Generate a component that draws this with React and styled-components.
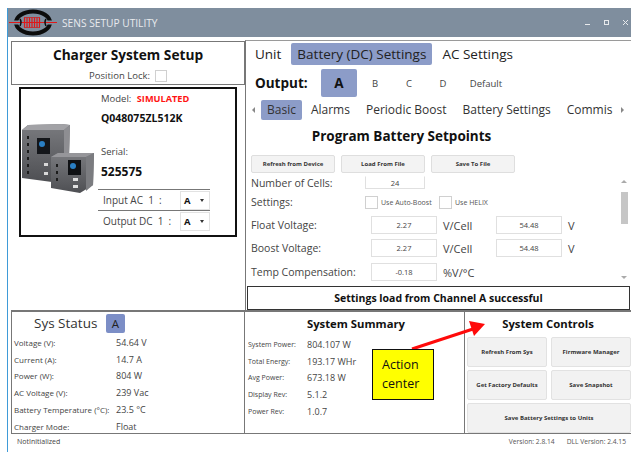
import React from "react";
import styled, { createGlobalStyle } from "styled-components";

const GlobalStyle = createGlobalStyle`
  html, body {
    margin: 0;
    padding: 0;
    background: #ffffff;
    font-family: "Open Sans", "Noto Sans", sans-serif;
    color: #2b2b2b;
  }
`;

const Page = styled.div`
  position: relative;
  width: 643px;
  height: 456px;
  overflow: hidden;
  padding: 8px 12px 0 7px;
  box-sizing: border-box;
`;

const Window = styled.div`
  width: 624px;
  height: 444px;
  border-left: 1px solid #3f9bd8;
  box-sizing: border-box;
  display: flex;
  flex-direction: column;
`;

const TitleBar = styled.div`
  height: 29px;
  flex: none;
  background: #7f8e9e;
  display: flex;
  align-items: center;
  padding-left: 1px;
  gap: 5px;
  color: #e9ebee;
  font-size: 10.2px;
`;

const TitleText = styled.span`
  flex: 1;
`;

const WindowButtons = styled.div`
  display: flex;
  gap: 14px;
  padding-right: 3px;
  align-items: center;
`;

const Content = styled.div`
  flex: 1;
  padding: 3px 0 0 3px;
  display: grid;
  grid-template-columns: 234px 386px;
  grid-template-rows: 272px 122px 18px;
`;

const LeftTop = styled.div`
  display: flex;
  flex-direction: column;
  padding-top: 1px;
  border-bottom: 2px solid #777;
`;

const SetupHeader = styled.div`
  height: 44px;
  box-sizing: border-box;
  border: 1px solid #777;
  display: flex;
  flex-direction: column;
  align-items: center;
`;

const SetupTitle = styled.div`
  font-size: 13.7px;
  font-weight: 700;
  color: #111;
  line-height: 20px;
  margin-top: 3px;
`;

const LockRow = styled.div`
  display: flex;
  align-items: center;
  gap: 5px;
  font-size: 9.5px;
  color: #444;
  margin-top: 4px;
`;

const CheckBox = styled.span`
  display: inline-block;
  width: ${(p) => p.$size || 10}px;
  height: ${(p) => p.$size || 10}px;
  border: 1px solid #d0d0d0;
  background: #fff;
  flex: none;
`;

const UnitCard = styled.div`
  width: 218px;
  height: 150px;
  margin: 2px 0 0 8px;
  box-sizing: border-box;
  border: 2px solid #111;
  display: flex;
`;

const PhotoSlot = styled.div`
  width: 78px;
  flex: none;
  padding: 33px 0 0 1px;
  box-sizing: border-box;
`;

const UnitInfo = styled.div`
  flex: 1;
  padding: 3px 0 0 2px;
  display: flex;
  flex-direction: column;
`;

const InfoLabel = styled.div`
  font-size: 9.5px;
  line-height: 14px;
  color: #444;
  margin-top: ${(p) => p.$top || 0}px;
`;

const SimTag = styled.span`
  color: #ff1414;
  font-weight: 700;
  font-size: 9.2px;
  margin-left: 3px;
`;

const InfoValue = styled.div`
  font-size: ${(p) => p.$size || 10.5}px;
  font-weight: 700;
  color: #111;
  line-height: 16px;
  margin-top: ${(p) => p.$top || 0}px;
`;

const PortRow = styled.div`
  width: 112px;
  margin-left: -3px;
  height: 21px;
  border-top: 1px solid #777;
  display: flex;
  align-items: center;
  justify-content: space-between;
  font-size: 10px;
  color: #444;
  padding-left: 5px;
  box-sizing: border-box;
  margin-top: ${(p) => p.$top || 0}px;
`;

const PortSelect = styled.div`
  width: 30px;
  height: 19px;
  box-sizing: border-box;
  border: 1px solid #e2e2e2;
  display: flex;
  align-items: center;
  justify-content: space-between;
  padding: 0 5px 0 3px;
  font-size: 9.5px;
  font-weight: 700;
  color: #111;
`;

const Caret = styled.span`
  width: 0;
  height: 0;
  border-left: 2px solid transparent;
  border-right: 2px solid transparent;
  border-top: 3px solid #333;
`;

const RightTop = styled.div`
  display: flex;
  flex-direction: column;
  border-top: 1px solid #9a9a9a;
  border-left: 1px solid #777;
  border-bottom: 2px solid #777;
  min-width: 0;
`;

const MainTabs = styled.div`
  height: 22px;
  margin-top: 2px;
  display: flex;
  align-items: center;
  padding-left: 6px;
  gap: 7px;
`;

const MainTab = styled.div`
  font-size: 13.5px;
  line-height: 22px;
  padding: 0 ${(p) => (p.$active ? 6 : 3)}px;
  border-radius: 2px;
  color: #222;
  background: ${(p) => (p.$active ? "#8c9cc8" : "transparent")};
`;

const OutputRow = styled.div`
  height: 28px;
  margin-top: 4px;
  display: flex;
  align-items: center;
  padding-left: 9px;
`;

const OutputLabel = styled.div`
  font-size: 13.5px;
  font-weight: 700;
  color: #111;
  width: 66px;
`;

const ChannelActive = styled.div`
  width: 36px;
  height: 28px;
  border-radius: 2px;
  background: #8c9cc8;
  display: flex;
  align-items: center;
  justify-content: center;
  font-size: 13.5px;
  font-weight: 700;
  color: #111;
`;

const Channel = styled.div`
  font-size: 9.5px;
  color: #444;
  width: ${(p) => p.$w}px;
  text-align: center;
`;

const SubTabs = styled.div`
  height: 20px;
  margin-top: 3px;
  display: flex;
  align-items: center;
  padding-left: 6px;
  width: 380px;
  box-sizing: border-box;
`;

const Arrow = styled.span`
  flex: none;
  width: 0;
  height: 0;
  border-top: 3px solid transparent;
  border-bottom: 3px solid transparent;
  border-right: ${(p) => (p.$right ? "none" : "3px solid #888")};
  border-left: ${(p) => (p.$right ? "3px solid #888" : "none")};
`;

const SubTabStrip = styled.div`
  width: 359px;
  margin-left: 6px;
  margin-right: 1px;
  display: flex;
  gap: 16px;
  white-space: nowrap;
`;

const SubTab = styled.div`
  font-size: 12px;
  line-height: 20px;
  padding: 0 ${(p) => (p.$active ? 6 : 0)}px;
  margin-right: ${(p) => (p.$active ? -7 : 0)}px;
  border-radius: 2px;
  color: #333;
  flex: none;
  background: ${(p) => (p.$active ? "#8c9cc8" : "transparent")};
`;

const SectionTitle = styled.div`
  font-size: 13.5px;
  font-weight: 700;
  color: #111;
  text-align: center;
  line-height: 18px;
  margin-top: 7px;
  padding-right: 74px;
`;

const ActionRow = styled.div`
  display: flex;
  gap: 6px;
  padding-left: 5px;
  margin-top: 10px;
`;

const ActionButton = styled.div`
  width: 84px;
  height: 18px;
  box-sizing: border-box;
  background: #f3f3f3;
  border: 1px solid #dedede;
  border-radius: 2px;
  display: flex;
  align-items: center;
  justify-content: center;
  font-size: 6px;
  font-weight: 700;
  color: #333;
`;

const SettingsScroll = styled.div`
  height: 110px;
  margin-top: 3px;
  display: flex;
  overflow: hidden;
`;

const FormArea = styled.div`
  flex: 1;
  padding-left: 5px;
  display: flex;
  flex-direction: column;
`;

const FormRow = styled.div`
  height: ${(p) => p.$h}px;
  display: flex;
  align-items: center;
`;

const FormLabel = styled.div`
  width: ${(p) => p.$w || 120}px;
  flex: none;
  font-size: 10.5px;
  color: #444;
`;

const NumberField = styled.div`
  width: ${(p) => p.$w || 66}px;
  height: ${(p) => p.$h || 18}px;
  box-sizing: border-box;
  border: 1px solid #e0e0e0;
  border-top-color: ${(p) => (p.$open ? "transparent" : "#e0e0e0")};
  flex: none;
  display: flex;
  align-items: center;
  justify-content: center;
  font-size: 7.5px;
  color: #444;
`;

const UnitText = styled.div`
  font-size: 11px;
  color: #444;
  margin-left: 6px;
  width: ${(p) => p.$w || "auto"};
`;

const OptionText = styled.span`
  font-size: 7px;
  color: #555;
  margin-left: 3px;
  width: ${(p) => p.$w}px;
`;

const ScrollBar = styled.div`
  width: 8px;
  margin-right: 3px;
  flex: none;
  display: flex;
  flex-direction: column;
  align-items: center;
  padding-top: 4px;
`;

const ScrollUp = styled.span`
  border-left: 3px solid transparent;
  border-right: 3px solid transparent;
  border-bottom: 3px solid #aaa;
`;

const ScrollDown = styled.span`
  border-left: 3px solid transparent;
  border-right: 3px solid transparent;
  border-top: 3px solid #aaa;
  margin-top: 52px;
`;

const ScrollThumb = styled.div`
  width: 7px;
  height: 32px;
  background: #c6c6c6;
  margin-top: 9px;
`;

const StatusMessage = styled.div`
  height: 24px;
  box-sizing: border-box;
  margin: 2px 1px 0 1px;
  border: 1px solid #333;
  display: flex;
  align-items: center;
  justify-content: center;
  font-size: 10.5px;
  font-weight: 700;
  color: #111;
`;

const SysPanel = styled.div`
  border-left: 1px solid #777;
  border-right: 1px solid #777;
  border-bottom: 1px solid #777;
  padding: 1px 0 0 2px;
  box-sizing: border-box;
`;

const SysHead = styled.div`
  display: flex;
  align-items: center;
  height: 20px;
  padding-left: 20px;
  margin-bottom: 1px;
`;

const SysTitle = styled.div`
  font-size: 13.5px;
  color: #333;
  width: 72px;
`;

const SysChip = styled.div`
  width: 19px;
  height: 19px;
  background: #7c8ec6;
  border-radius: 2px;
  font-size: 11.5px;
  display: flex;
  align-items: center;
  justify-content: center;
  color: #222;
`;

const StatRow = styled.div`
  height: ${(p) => p.$h || 16.8}px;
  display: flex;
  align-items: center;
`;

const StatLabel = styled.div`
  width: ${(p) => p.$w}px;
  flex: none;
  font-size: ${(p) => p.$size}px;
  color: #444;
  white-space: nowrap;
`;

const StatValue = styled.div`
  font-size: ${(p) => p.$size || 9}px;
  color: #444;
`;

const SummaryPanel = styled.div`
  padding: 0 0 0 3px;
`;

const PanelTitle = styled.div`
  font-size: 11.3px;
  font-weight: 700;
  color: #111;
  text-align: center;
  line-height: 20px;
  margin-top: 2px;
`;

const BottomRight = styled.div`
  display: grid;
  grid-template-columns: 219px 167px;
  border-bottom: 1px solid #777;
`;

const SummaryBody = styled.div`
  margin-top: 2px;
`;

const ControlsPanel = styled.div`
  border-left: 1px solid #777;
`;

const ControlsGrid = styled.div`
  display: grid;
  grid-template-columns: 80px 80px;
  grid-auto-rows: 30px;
  gap: 3px 4px;
  padding: 3px 0 0 2px;
`;

const ControlButton = styled.div`
  background: #f2f2f2;
  border: 1px solid #e2e2e2;
  border-radius: 2px;
  box-sizing: border-box;
  display: flex;
  align-items: center;
  justify-content: center;
  font-size: 6px;
  font-weight: 700;
  color: #333;
  grid-column: ${(p) => (p.$wide ? "1 / span 2" : "auto")};
`;

const FooterLeft = styled.div`
  font-size: 7px;
  color: #444;
  padding: 3px 0 0 6px;
`;

const FooterRight = styled.div`
  font-size: 6.7px;
  color: #555;
  display: flex;
  justify-content: flex-end;
  gap: 12px;
  padding: 3px 5px 0 0;
`;

const Callout = styled.div`
  position: absolute;
  left: 372px;
  top: 349px;
  width: 62px;
  height: 51px;
  box-sizing: border-box;
  background: #ffff00;
  border: 1px solid #111;
  font-size: 12.5px;
  line-height: 19px;
  color: #111;
  padding: 5px 0 0 9px;
`;

const ArrowOverlay = styled.svg`
  position: absolute;
  left: 405px;
  top: 315px;
`;

function Logo() {
  return (
    <svg width="48" height="29" viewBox="0 0 48 29">
      <ellipse cx="24" cy="14.5" rx="17" ry="11" fill="none" stroke="#0c0c0c" strokeWidth="4" />
      <rect x="3" y="12.5" width="42" height="4" fill="#7f8e9e" />
      <path d="M0 14.5H48" stroke="#e01818" strokeWidth="1" />
      <path d="M11 11Q13 14 11 18M37 11Q35 14 37 18" fill="none" stroke="#0c0c0c" strokeWidth="1.5" />
      <path d="M15.5 9.5V19.5M18 9.5V19.5M20.5 9.5V19.5M23 9.5V19.5M25.5 9.5V19.5M28 9.5V19.5M30.5 9.5V19.5" stroke="#e01818" strokeWidth="1.2" />
      <path d="M15 9.5H31M15 19.5H31" stroke="#c22" strokeWidth="0.8" />
    </svg>
  );
}

function ChargerPhoto() {
  return (
    <svg width="76" height="76" viewBox="4 2 76 76">
      <defs>
        <linearGradient id="frontFace" x1="0" y1="0" x2="0" y2="1">
          <stop offset="0" stopColor="#7a7b7f" />
          <stop offset="1" stopColor="#4e4f53" />
        </linearGradient>
      </defs>
      <path d="M4 10 L10 5 L44 4 L52 5 L51 36 L34 62 L4 58 Z" fill="url(#frontFace)" />
      <path d="M10 5 L44 4 L52 5 L46 10 L4 10 Z" fill="#a2a2a6" />
      <path d="M46 10 L52 5 L51 36 L46 36 Z" fill="#8e8e92" />
      <rect x="19" y="18" width="13" height="16" fill="#14161a" />
      <circle cx="24" cy="24" r="3" fill="#2a7fc4" />
      <path d="M10 16v3M10 23v3M10 30v3M10 37v3M10 44v3M10 51v3" stroke="#1c1c1c" strokeWidth="2" />
      <rect x="26" y="43" width="4" height="3" fill="#d8d8d8" />
      <rect x="26" y="52" width="4" height="3" fill="#d8d8d8" />
      <path d="M33 37 L40 33 L76 33 L75 65 L62 73 L33 68 Z" fill="url(#frontFace)" />
      <path d="M33 37 L40 33 L76 33 L68 37 Z" fill="#96969a" />
      <path d="M68 37 L76 33 L75 65 L68 71 Z" fill="#7b7c80" />
      <rect x="50" y="40" width="13" height="15" fill="#0f1114" />
      <circle cx="55" cy="46" r="3" fill="#2a7fc4" />
      <path d="M39 44v3M39 51v3M39 58v3" stroke="#1c1c1c" strokeWidth="2" />
      <rect x="55" y="58" width="5" height="3" fill="#e0e0e0" />
      <rect x="55" y="65" width="5" height="3" fill="#e0e0e0" />
    </svg>
  );
}

const stats = [
  ["Voltage (V):", "54.64 V"],
  ["Current (A):", "14.7 A"],
  ["Power (W):", "804 W"],
  ["AC Voltage (V):", "239 Vac"],
  ["Battery Temperature (°C):", "23.5 °C"],
  ["Charger Mode:", "Float"],
];

const summary = [
  ["System Power:", "804.107 W"],
  ["Total Energy:", "193.17 WHr"],
  ["Avg Power:", "673.18 W"],
  ["Display Rev:", "5.1.2"],
  ["Power Rev:", "1.0.7"],
];

export default function App() {
  return (
    <Page>
      <GlobalStyle />
      <Window>
        <TitleBar>
          <Logo />
          <TitleText>SENS SETUP UTILITY</TitleText>
          <WindowButtons>
            <svg width="5" height="5" viewBox="0 0 5 5"><path d="M0 4.5H5" stroke="#e8eaec" /></svg>
            <svg width="5" height="5" viewBox="0 0 5 5"><rect x="0.5" y="0.5" width="4" height="4" fill="none" stroke="#e8eaec" /></svg>
            <svg width="5" height="5" viewBox="0 0 5 5"><path d="M0 0L5 5M5 0L0 5" stroke="#e8eaec" /></svg>
          </WindowButtons>
        </TitleBar>
        <Content>
          <LeftTop>
            <SetupHeader>
              <SetupTitle>Charger System Setup</SetupTitle>
              <LockRow>
                Position Lock: <CheckBox />
              </LockRow>
            </SetupHeader>
            <UnitCard>
              <PhotoSlot>
                <ChargerPhoto />
              </PhotoSlot>
              <UnitInfo>
                <InfoLabel>
                  Model: <SimTag>SIMULATED</SimTag>
                </InfoLabel>
                <InfoValue $top={4}>Q048075ZL512K</InfoValue>
                <InfoLabel $top={19}>Serial:</InfoLabel>
                <InfoValue $size={12} $top={5}>525575</InfoValue>
                <PortRow $top={9}>
                  <span>Input AC&nbsp; 1&nbsp; :</span>
                  <PortSelect>A<Caret /></PortSelect>
                </PortRow>
                <PortRow>
                  <span>Output DC&nbsp; 1&nbsp; :</span>
                  <PortSelect>A<Caret /></PortSelect>
                </PortRow>
              </UnitInfo>
            </UnitCard>
          </LeftTop>

          <RightTop>
            <MainTabs>
              <MainTab>Unit</MainTab>
              <MainTab $active>Battery (DC) Settings</MainTab>
              <MainTab>AC Settings</MainTab>
            </MainTabs>
            <OutputRow>
              <OutputLabel>Output:</OutputLabel>
              <ChannelActive>A</ChannelActive>
              <Channel $w={36}>B</Channel>
              <Channel $w={32}>C</Channel>
              <Channel $w={36}>D</Channel>
              <Channel $w={50}>Default</Channel>
            </OutputRow>
            <SubTabs>
              <Arrow />
              <SubTabStrip>
                <SubTab $active>Basic</SubTab>
                <SubTab>Alarms</SubTab>
                <SubTab>Periodic Boost</SubTab>
                <SubTab>Battery Settings</SubTab>
                <SubTab>Commis</SubTab>
              </SubTabStrip>
              <Arrow $right />
            </SubTabs>
            <SectionTitle>Program Battery Setpoints</SectionTitle>
            <ActionRow>
              <ActionButton>Refresh from Device</ActionButton>
              <ActionButton>Load From File</ActionButton>
              <ActionButton>Save To File</ActionButton>
            </ActionRow>
            <SettingsScroll>
              <FormArea>
                <FormRow $h={13}>
                  <FormLabel $w={114}>Number of Cells:</FormLabel>
                  <NumberField $w={60} $h={13} $open>24</NumberField>
                </FormRow>
                <FormRow $h={26}>
                  <FormLabel $w={114}>Settings:</FormLabel>
                  <CheckBox $size={11} />
                  <OptionText $w={58}>Use Auto-Boost</OptionText>
                  <CheckBox $size={11} />
                  <OptionText>Use HELIX</OptionText>
                </FormRow>
                <FormRow $h={20}>
                  <FormLabel>Float Voltage:</FormLabel>
                  <NumberField>2.27</NumberField>
                  <UnitText $w="53px">V/Cell</UnitText>
                  <NumberField>54.48</NumberField>
                  <UnitText>V</UnitText>
                </FormRow>
                <FormRow $h={26}>
                  <FormLabel>Boost Voltage:</FormLabel>
                  <NumberField>2.27</NumberField>
                  <UnitText $w="53px">V/Cell</UnitText>
                  <NumberField>54.48</NumberField>
                  <UnitText>V</UnitText>
                </FormRow>
                <FormRow $h={22}>
                  <FormLabel>Temp Compensation:</FormLabel>
                  <NumberField>-0.18</NumberField>
                  <UnitText>%V/°C</UnitText>
                </FormRow>
              </FormArea>
              <ScrollBar>
                <ScrollUp />
                <ScrollThumb />
                <ScrollDown />
              </ScrollBar>
            </SettingsScroll>
            <StatusMessage>Settings load from Channel A successful</StatusMessage>
          </RightTop>

          <SysPanel>
            <SysHead>
              <SysTitle>Sys Status</SysTitle>
              <SysChip>A</SysChip>
            </SysHead>
            {stats.map(([label, value]) => (
              <StatRow key={label}>
                <StatLabel $w={102} $size={8}>{label}</StatLabel>
                <StatValue>{value}</StatValue>
              </StatRow>
            ))}
          </SysPanel>

          <BottomRight>
            <SummaryPanel>
              <PanelTitle>System Summary</PanelTitle>
              <SummaryBody>
                {summary.map(([label, value]) => (
                  <StatRow key={label}>
                    <StatLabel $w={59} $size={7}>{label}</StatLabel>
                    <StatValue>{value}</StatValue>
                  </StatRow>
                ))}
              </SummaryBody>
            </SummaryPanel>
            <ControlsPanel>
              <PanelTitle>System Controls</PanelTitle>
              <ControlsGrid>
                <ControlButton>Refresh From Sys</ControlButton>
                <ControlButton>Firmware Manager</ControlButton>
                <ControlButton>Get Factory Defaults</ControlButton>
                <ControlButton>Save Snapshot</ControlButton>
                <ControlButton $wide>Save Battery Settings to Units</ControlButton>
              </ControlsGrid>
            </ControlsPanel>
          </BottomRight>

          <FooterLeft>NotInitialized</FooterLeft>
          <FooterRight>
            <span>Version: 2.8.14</span>
            <span>DLL Version: 2.4.15</span>
          </FooterRight>
        </Content>
      </Window>

      <ArrowOverlay width="90" height="40" viewBox="0 0 90 40">
        <path d="M7 34 L68 14" stroke="#ff0a0a" strokeWidth="3" />
        <path d="M80 9 L64 6 L69 21 Z" fill="#ff0a0a" />
      </ArrowOverlay>
      <Callout>
        Action
        <br />
        center
      </Callout>
    </Page>
  );
}
